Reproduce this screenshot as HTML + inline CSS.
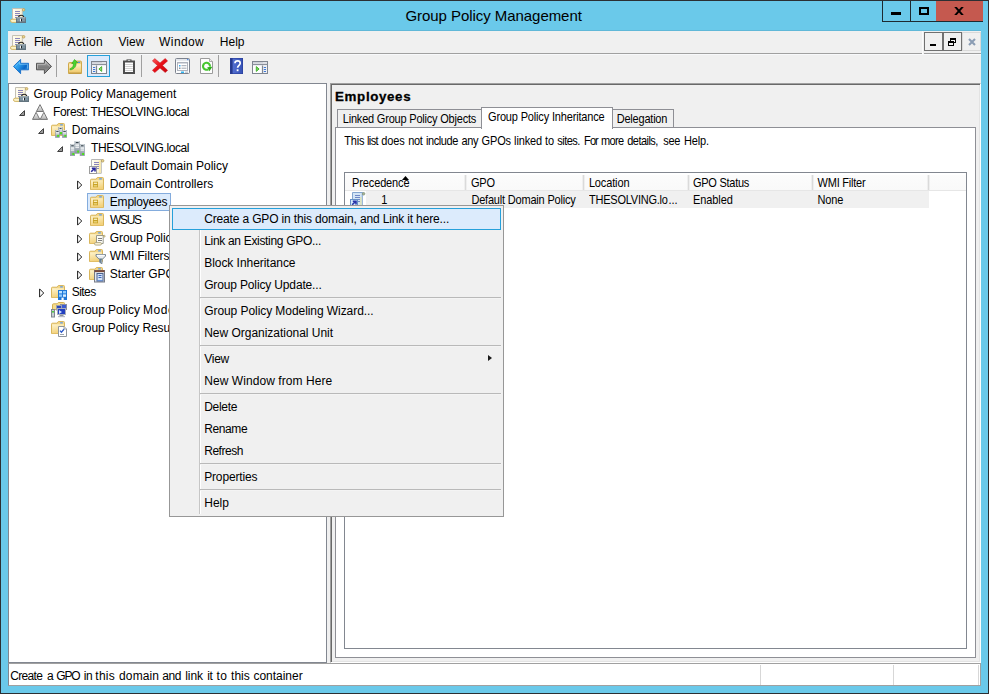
<!DOCTYPE html>
<html lang="en">
<head>
<meta charset="utf-8">
<title>Group Policy Management</title>
<style>
*{box-sizing:border-box;margin:0;padding:0}
html,body{width:989px;height:694px;overflow:hidden}
body{background:#6ac9ea;font-family:"Liberation Sans",sans-serif;font-size:12px;color:#000;position:relative}
.t{position:absolute;white-space:pre;color:#000}
.ic{position:absolute;line-height:0}
.ic svg{display:block}
#frame{position:absolute;left:0;top:0;width:989px;height:694px;border:1px solid #2b2f33;z-index:50;pointer-events:none}
#capbtns{position:absolute;left:882px;top:1px;width:101px;height:21px;background:#1d2a31}
.cb{position:absolute;top:0;height:20px}
.cb.min{left:1px;width:27px;background:#6ac9ea}
.cb.max{left:29px;width:25px;background:#6ac9ea}
.cb.cls{left:54px;width:47px;background:#c5594f}
.cb.min i{position:absolute;left:8px;top:11px;width:10px;height:3px;background:#000}
.cb.max i{position:absolute;left:8px;top:6px;width:10px;height:8px;border:2px solid #000;border-top-width:2px}
.cb.cls svg{position:absolute;left:18px;top:6px}
#tbline{position:absolute;left:8px;top:30px;width:973px;height:1px;background:#60b8d8}
#menubar{position:absolute;left:8px;top:31px;width:973px;height:23px;background:#f0f0f0;border-bottom:1px solid #a0a0a0}
#menubar .ic,#menubar .t{margin-left:-8px;margin-top:-31px}
#mdibtns{position:absolute;left:916px;top:1px;width:57px;height:19px}
#mdigap{position:absolute;left:914px;top:0;width:2px;height:23px;background:#f0f0f0;border-left:1px solid #fbfbfb}
.mb{position:absolute;top:0;width:19px;height:19px;border:1px solid #707070;background:#f0f0f0}
.mb:nth-child(1){left:0}.mb:nth-child(2){left:19px}.mb:nth-child(3){left:38px;border-color:#d9d9d9}
.mb .mmin{position:absolute;left:5px;top:11px;width:6px;height:2px;background:#000}
.mb svg{position:absolute;left:4px;top:5px}
.mb.dis svg{left:5px;top:5px}
#toolbar{position:absolute;left:8px;top:54px;width:973px;height:29px;background:#f0f0f0;border-top:1px solid #f8f9fb}
#toolbar .ic,#toolbar .tsep,#toolbar .tpress{margin-left:-8px;margin-top:-55px}
.tsep{position:absolute;top:55px;width:1px;height:22px;background:#a0a0a0}
.tpress{position:absolute;width:23px;height:22px;border:1px solid #26a0da;background:#dbe9fb}
#client{position:absolute;left:8px;top:83px;width:973px;height:581px;background:#f0f0f0}
#tree{position:absolute;left:0;top:0;width:319px;height:580px;background:#fff;border:1px solid #828790;overflow:hidden}
#tree .ic,#tree .t,#tree #sel{margin-left:-9px;margin-top:-84px}
#sel{position:absolute;left:87px;top:193px;width:84px;height:18px;border:1px solid #84acdd;background:#dcebfc}
#right{position:absolute;left:322px;top:0;width:651px;height:580px;background:#f0f0f0;border:1px solid;border-color:#a0a0a0 #fff #fff #a0a0a0;box-shadow:inset 1px 1px 0 #696969,inset -1px -1px 0 #e3e3e3}
#right>*,#rptext>*{margin-left:-331px;margin-top:-84px}
#right>#rptext{margin:0}
.tabb{position:absolute;top:109px;height:19px;border:1px solid #8e8f95;border-bottom:none;background:#f0f0f0}
#tab1{left:337px;width:145px}
#tab3{left:611px;width:63px}
#tab2{position:absolute;left:481px;top:107px;width:132px;height:22px;border:1px solid #8e8f95;border-bottom:none;background:#fff}
#tabpane{position:absolute;left:335px;top:127px;width:641px;height:531px;background:#fff;border:1px solid #8e8f95}
#list{position:absolute;left:344px;top:172px;width:623px;height:477px;background:#fff;border:1px solid #828790}
#lhead{position:absolute;left:0;top:0;width:621px;height:18px;background:linear-gradient(#fff 0,#fff 2px,#fcfcfc 2px,#f9f9f9 100%);border-bottom:1px solid #e6e6e6}
.cd{position:absolute;top:2px;width:3px;height:15px;background:#dadada;border-left:1px solid #efefef;border-right:1px solid #efefef;margin-left:-2px}
#lrow{position:absolute;left:21px;top:18px;width:563px;height:17px;background:#f0f0f0}
#status{position:absolute;left:8px;top:663px;width:973px;height:23px;background:#fff;border:1px solid #a0a0a0;border-left-color:#828790}
#status .t{margin-left:-9px;margin-top:-664px}
.sd{position:absolute;top:1px;margin-left:-1px;width:1px;height:20px;background:#d7d7d7}
#ctx{position:absolute;left:169px;top:205px;width:335px;height:312px;background:#f0f0f0;border:1px solid #979797;z-index:10}
#ctxg{position:absolute;left:29px;top:2px;width:2px;height:306px;border-left:1px solid #c6c6c6;border-right:1px solid #fff}
#ctxh{position:absolute;left:2px;top:2px;width:329px;height:22px;border:1px solid #26a0da;background:#dcebfc}
.cms{position:absolute;left:30px;width:301px;height:2px;border-top:1px solid #b9b9b9;border-bottom:1px solid #f4f4f4;margin-top:-206px}
#ctxa{position:absolute;left:318px;top:149px;width:0;height:0;border:3.500px solid transparent;border-left:4px solid #1a1a1a;border-right:none}
.hd{-webkit-text-stroke:.3px #000}
.tab,.rp,.lh,.lr{transform:scaleY(1.09);transform-origin:0 11.800px}

</style>
</head>
<body>
<div id="frame"></div>
<div id="titlebar"><div class="ic" style="left:10px;top:8px"><svg width="16" height="15" viewBox="0 0 16 15" >
<path d="M2.500 .5h10.300l-.5 1.500v9.500H2.500z" fill="#fdf6dc" stroke="#c4c0b4" stroke-width="1"/>
<path d="M3.200 1.200h2v9.800h-2z" fill="#fffdf2"/>
<circle cx="13.600" cy="1.800" r="1.300" fill="#e9d48f" stroke="#b7994d" stroke-width=".7"/>
<path d="M5 3.500h5M5 5.500h5M5 7.500h5M5 9.500h3" stroke="#8a86bc" stroke-width="1"/>
<rect x=".5" y="11.200" width="8" height="3.200" rx="1.600" fill="#fdf3c8" stroke="#d1b566" stroke-width="1"/>
<path d="M8.600 9.600c0-3.100 5-3.100 5.200 0" fill="#f7eecb" stroke="#2a2824" stroke-width="1.100"/>
<rect x="6.500" y="9.500" width="9" height="5" fill="#71848f" stroke="#62747f" stroke-width="1"/>
<rect x="6.500" y="9.100" width="9" height="1.400" fill="#a3b1ba"/>
<rect x="7.200" y="11.300" width="7.600" height="1.700" fill="#8ea5b3" opacity=".7"/>
<rect x="10" y="10.800" width="1" height="2.600" fill="#f4f6f7"/><rect x="11" y="10.800" width="1" height="2.400" fill="#1c2226"/>
</svg></div>
<div class="t title" style="left:405.50px;top:4.80px;font-size:15px;line-height:22px;letter-spacing:-0.056px">Group Policy Management</div>
<div id="capbtns"><div class="cb min"><i></i></div><div class="cb max"><i></i></div><div class="cb cls"><svg width="10" height="8" viewBox="0 0 10 8"><path d="M.2 0h2.600L5 2.600 7.200 0h2.600L6.300 4l3.500 4H7.200L5 5.400 2.800 8H.2L3.700 4z" fill="#000"/></svg></div></div>
</div>
<div id="tbline"></div>
<div id="menubar"><div class="ic" style="left:10px;top:35px"><svg width="16" height="15" viewBox="0 0 16 15" >
<path d="M2.500 .5h10.300l-.5 1.500v9.500H2.500z" fill="#fdf6dc" stroke="#c4c0b4" stroke-width="1"/>
<path d="M3.200 1.200h2v9.800h-2z" fill="#fffdf2"/>
<circle cx="13.600" cy="1.800" r="1.300" fill="#e9d48f" stroke="#b7994d" stroke-width=".7"/>
<path d="M5 3.500h5M5 5.500h5M5 7.500h5M5 9.500h3" stroke="#8a86bc" stroke-width="1"/>
<rect x=".5" y="11.200" width="8" height="3.200" rx="1.600" fill="#fdf3c8" stroke="#d1b566" stroke-width="1"/>
<path d="M8.600 9.600c0-3.100 5-3.100 5.200 0" fill="#f7eecb" stroke="#2a2824" stroke-width="1.100"/>
<rect x="6.500" y="9.500" width="9" height="5" fill="#71848f" stroke="#62747f" stroke-width="1"/>
<rect x="6.500" y="9.100" width="9" height="1.400" fill="#a3b1ba"/>
<rect x="7.200" y="11.300" width="7.600" height="1.700" fill="#8ea5b3" opacity=".7"/>
<rect x="10" y="10.800" width="1" height="2.600" fill="#f4f6f7"/><rect x="11" y="10.800" width="1" height="2.400" fill="#1c2226"/>
</svg></div>
<div class="t mi" style="left:33.90px;top:32.84px;font-size:12px;line-height:18px;letter-spacing:-0.236px">File</div>
<div class="t mi" style="left:67.60px;top:32.84px;font-size:12px;line-height:18px;letter-spacing:0.357px">Action</div>
<div class="t mi" style="left:118.60px;top:32.84px;font-size:12px;line-height:18px;letter-spacing:-0.024px">View</div>
<div class="t mi" style="left:159.10px;top:32.84px;font-size:12px;line-height:18px;letter-spacing:0.402px">Window</div>
<div class="t mi" style="left:219.70px;top:32.84px;font-size:12px;line-height:18px;letter-spacing:0.053px">Help</div>
<div id="mdigap"></div><div id="mdibtns"><div class="mb"><i class="mmin"></i></div><div class="mb"><svg width="8" height="8" viewBox="0 0 8 8" shape-rendering="crispEdges"><rect x="2" y="0" width="6" height="2" fill="#000"/><rect x="7" y="2" width="1" height="3" fill="#000"/><rect x="6" y="4" width="1" height="1" fill="#000"/><rect x="2" y="2" width="1" height="1" fill="#000"/><rect x="0" y="3" width="6" height="2" fill="#000"/><rect x="0" y="5" width="1" height="3" fill="#000"/><rect x="5" y="5" width="1" height="3" fill="#000"/><rect x="0" y="7" width="6" height="1" fill="#000"/></svg></div><div class="mb dis"><svg width="8" height="8" viewBox="0 0 8 8"><path d="M1 1L7 7M7 1L1 7" stroke="#8b9db4" stroke-width="2.100"/></svg></div></div>
</div>
<div id="toolbar"><div class="ic" style="left:13px;top:59px"><svg width="16" height="15" viewBox="0 0 16 15" ><defs><linearGradient id="bk" x1="0" y1="0" x2="1" y2=".6"><stop offset="0" stop-color="#3db0f5"/><stop offset=".45" stop-color="#2a9cec"/><stop offset=".8" stop-color="#0a66c6"/><stop offset="1" stop-color="#2c8de0"/></linearGradient></defs>
<path d="M.5 7.400L7.600 .4v3.900h8v6.500h-8v3.900z" fill="url(#bk)" stroke="#1f74cc" stroke-width="1" stroke-linejoin="round"/>
<path d="M2.200 7.400L6.600 3v2.300h8v4.300" fill="none" stroke="#8fd3fb" stroke-width=".8" opacity=".75"/></svg></div><div class="ic" style="left:36px;top:59px"><svg width="16" height="15" viewBox="0 0 16 15" ><defs><linearGradient id="fw" x1="0" y1="0" x2="0" y2="1"><stop offset="0" stop-color="#b4b4b4"/><stop offset=".55" stop-color="#7c7c7c"/><stop offset="1" stop-color="#9c9c9c"/></linearGradient></defs>
<path d="M15.500 7.400L8.400 .4v3.900H.5v6.500h7.900v3.900z" fill="url(#fw)" stroke="#545454" stroke-width="1" stroke-linejoin="round"/>
<path d="M1.500 9.600V5.300h7.900V3l4.400 4.400" fill="none" stroke="#d2d2d2" stroke-width=".8" opacity=".7"/></svg></div><div class="tsep" style="left:56px"></div><div class="ic" style="left:68px;top:59px"><svg width="14" height="15" viewBox="0 0 14 15" >
<defs><linearGradient id="upg" x1="0" y1="0" x2="0" y2="1"><stop offset="0" stop-color="#fdf1c6"/><stop offset="1" stop-color="#efc868"/></linearGradient></defs>
<path d="M.5 4.500q0-1 1-1h4.500l1.200-1.400h5.300q1 0 1 1v11.400H.5z" fill="#f1d27a" stroke="#cfa94c" stroke-width="1"/>
<path d="M1.100 5.200h11.800v8.600H1.100z" fill="url(#upg)"/>
<path d="M1 14h12" stroke="#b48a3a" stroke-width=".8"/>
<rect x="9.600" y="2.800" width="2.600" height="1.100" rx=".5" fill="#4f8fe6"/>
<path d="M1.800 9.900c2.800-1 3.900-3 3.600-5.600l-1.700.4 2.800-4.200 3.300 3.200-1.900.1c.8 3.500-1.800 6.400-5.400 7.100z" fill="#49d42f" stroke="#27a318" stroke-width=".6" stroke-linejoin="round"/>
</svg></div><div class="tpress" style="left:87px;top:55px"></div><div class="ic" style="left:91px;top:61px"><svg width="16" height="13" viewBox="0 0 16 13" >
<rect x=".5" y=".5" width="15" height="12" fill="#fdfdfd" stroke="#7f8590" stroke-width="1"/>
<rect x="1" y="1" width="14" height="1.800" fill="#cfd2d9"/>
<rect x="11.500" y="1.200" width="1" height="1" fill="#fff"/><rect x="13.500" y="1.200" width="1" height="1" fill="#fff"/>
<path d="M.5 3.500h15" stroke="#8a909b" stroke-width="1"/>
<path d="M1 4.500h14" stroke="#eceef2" stroke-width="1"/>
<rect x="1" y="5" width="4" height="7" fill="#eef0f4"/>
<path d="M5.500 4.500v8" stroke="#7f8590" stroke-width="1.200"/>
<path d="M2 6.500h2.200M2 8.500h2.200M2 10.500h2.200" stroke="#3f79d8" stroke-width="1.100"/>
<path d="M10.700 5.600v4.800L7.900 8z" fill="#8fe07c" stroke="#3fae28" stroke-width=".9" stroke-linejoin="round"/>
</svg></div><div class="ic" style="left:123px;top:59px"><svg width="12" height="15" viewBox="0 0 12 15" >
<rect x="1" y="2.500" width="10" height="11.500" fill="#fefefe" stroke="#4e4e4e" stroke-width="2"/>
<rect x="3.500" y=".4" width="5" height="2.200" fill="#4e4e4e"/>
<rect x="4.700" y="1" width="2.600" height="1" fill="#bdbdbd"/>
<path d="M2.200 5.500h7.600M2.200 7.500h7.600M2.200 9.500h7.600M2.200 11.500h7.600" stroke="#cfcfcf" stroke-width="1"/>
</svg></div><div class="tsep" style="left:141px"></div><div class="ic" style="left:152px;top:58px"><svg width="16" height="15" viewBox="0 0 16 15" >
<defs><linearGradient id="dl" x1="0" y1="0" x2="1" y2="1"><stop offset="0" stop-color="#ff5a5a"/><stop offset=".5" stop-color="#e60f17"/><stop offset="1" stop-color="#c4060e"/></linearGradient></defs>
<path d="M2.700 .6L8 5 13.200 .5 15.600 2.900 10.500 7.500 15.600 12.300 13.300 14.600 8 10 2.800 14.600 .4 12.300 5.500 7.500 .4 3z" fill="url(#dl)" stroke="#c8141c" stroke-width=".5" stroke-linejoin="round"/>
</svg></div><div class="ic" style="left:175px;top:58px"><svg width="15" height="16" viewBox="0 0 15 16" >
<rect x=".5" y=".5" width="14" height="15" rx="1" fill="#fbfcfd" stroke="#7c828e" stroke-width="1"/>
<rect x="1" y="1" width="13" height="1.800" fill="#e3e6eb"/>
<rect x="12" y="1" width="1.500" height="1.200" fill="#5b8fe0"/>
<rect x="2.500" y="4.500" width="10" height="8" fill="#fff" stroke="#aeb3bd" stroke-width="1"/>
<path d="M3 5.500h9" stroke="#d8dbe1" stroke-width="1"/>
<rect x="4" y="7" width="1.500" height="1.500" fill="#35a7f0"/><path d="M6.500 7.700h5" stroke="#9fa5b0" stroke-width="1"/>
<rect x="4" y="9.500" width="1.500" height="1.500" fill="#8a919c"/><path d="M6.500 10.200h5" stroke="#9fa5b0" stroke-width="1"/>
<rect x="6" y="13.500" width="3" height="1.500" fill="#2fb5f2"/><rect x="10" y="13.500" width="3" height="1.500" fill="#c9cdd4"/>
</svg></div><div class="ic" style="left:200px;top:58px"><svg width="13" height="16" viewBox="0 0 13 16" >
<path d="M.5 .5h9l3 3v12H.5z" fill="#fdfdfd" stroke="#9b9b9b" stroke-width="1"/>
<path d="M9.500 .5v3h3" fill="#ececec" stroke="#9b9b9b" stroke-width=".8"/>
<path d="M8.300 11.300A3.500 3.500 0 1 1 10 8.600" fill="none" stroke="#46c62f" stroke-width="2.100"/>
<path d="M7.200 9.200l5.200-.4-3 4.400z" fill="#2fae1c"/>
</svg></div><div class="tsep" style="left:218px"></div><div class="ic" style="left:230px;top:58px"><svg width="13" height="16" viewBox="0 0 13 16" >
<defs><linearGradient id="hp" x1="0" y1="0" x2="1" y2="0"><stop offset="0" stop-color="#5b77d8"/><stop offset="1" stop-color="#3450b4"/></linearGradient></defs>
<rect x="0" y="0" width="13" height="16" fill="url(#hp)"/>
<rect x="0" y="0" width="2.600" height="16" fill="#26398c"/>
<rect x=".3" y=".3" width="12.400" height="15.400" fill="none" stroke="#2b3f99" stroke-width=".6"/>
<path d="M5 5.200c0-3 5.200-3 5.200 0 0 2-2.600 2.200-2.600 4.600" fill="none" stroke="#fff" stroke-width="1.700"/>
<rect x="6.700" y="11.300" width="1.800" height="1.900" fill="#fff"/>
</svg></div><div class="ic" style="left:252px;top:61px"><svg width="16" height="13" viewBox="0 0 16 13" >
<rect x=".5" y=".5" width="15" height="12" fill="#fdfdfd" stroke="#7f8590" stroke-width="1"/>
<rect x="1" y="1" width="14" height="1.800" fill="#cfd2d9"/>
<rect x="11.500" y="1.200" width="1" height="1" fill="#fff"/><rect x="13.500" y="1.200" width="1" height="1" fill="#fff"/>
<path d="M.5 3.500h15" stroke="#8a909b" stroke-width="1"/>
<path d="M1 4.500h14" stroke="#eceef2" stroke-width="1"/>
<rect x="11" y="5" width="4" height="7" fill="#eef0f4"/>
<path d="M10.500 4.500v8" stroke="#7f8590" stroke-width="1.200"/>
<path d="M11.800 6.500h2.200M11.800 8.500h2.200M11.800 10.500h2.200" stroke="#3f79d8" stroke-width="1.100"/>
<path d="M4.300 5.600v4.800L7.100 8z" fill="#6fd558" stroke="#3fae28" stroke-width=".9" stroke-linejoin="round"/>
</svg></div></div>
<div id="client">
<div id="tree">
<div id="sel"></div>
<div class="ic" style="left:13px;top:87px"><svg width="16" height="15" viewBox="0 0 16 15" >
<path d="M2.500 .5h10.300l-.5 1.500v9.500H2.500z" fill="#fdf6dc" stroke="#c4c0b4" stroke-width="1"/>
<path d="M3.200 1.200h2v9.800h-2z" fill="#fffdf2"/>
<circle cx="13.600" cy="1.800" r="1.300" fill="#e9d48f" stroke="#b7994d" stroke-width=".7"/>
<path d="M5 3.500h5M5 5.500h5M5 7.500h5M5 9.500h3" stroke="#8a86bc" stroke-width="1"/>
<rect x=".5" y="11.200" width="8" height="3.200" rx="1.600" fill="#fdf3c8" stroke="#d1b566" stroke-width="1"/>
<path d="M8.600 9.600c0-3.100 5-3.100 5.200 0" fill="#f7eecb" stroke="#2a2824" stroke-width="1.100"/>
<rect x="6.500" y="9.500" width="9" height="5" fill="#71848f" stroke="#62747f" stroke-width="1"/>
<rect x="6.500" y="9.100" width="9" height="1.400" fill="#a3b1ba"/>
<rect x="7.200" y="11.300" width="7.600" height="1.700" fill="#8ea5b3" opacity=".7"/>
<rect x="10" y="10.800" width="1" height="2.600" fill="#f4f6f7"/><rect x="11" y="10.800" width="1" height="2.400" fill="#1c2226"/>
</svg></div><div class="ic" style="left:19px;top:110px"><svg width="6" height="6" viewBox="0 0 6 6"><path d="M5.500 .6v4.900H.6z" fill="#9c9c9c" stroke="#3e3e3e" stroke-width="1" stroke-linejoin="miter"/></svg></div><div class="ic" style="left:32px;top:104px"><svg width="16" height="16" viewBox="0 0 16 16" >
<defs><linearGradient id="fg" x1="0" y1="0" x2="0" y2="1"><stop offset="0" stop-color="#f8f8f8"/><stop offset="1" stop-color="#b4b4b4"/></linearGradient></defs>
<path d="M8 .6L11.6 7.5H4.4z" fill="url(#fg)" stroke="#5c5c5c" stroke-width=".8" stroke-linejoin="round"/>
<path d="M4.1 8.3L7.8 15.4H.5z" fill="url(#fg)" stroke="#5c5c5c" stroke-width=".8" stroke-linejoin="round"/>
<path d="M11.9 8.3L15.5 15.4H8.2z" fill="url(#fg)" stroke="#5c5c5c" stroke-width=".8" stroke-linejoin="round"/>
</svg></div><div class="ic" style="left:38px;top:128px"><svg width="6" height="6" viewBox="0 0 6 6"><path d="M5.500 .6v4.900H.6z" fill="#9c9c9c" stroke="#3e3e3e" stroke-width="1" stroke-linejoin="miter"/></svg></div><div class="ic" style="left:51px;top:123px"><svg width="17" height="16" viewBox="0 0 17 16" ><defs><linearGradient id="fo" x1="0" y1="0" x2=".3" y2="1"><stop offset="0" stop-color="#fef4cf"/><stop offset="1" stop-color="#f3d27c"/></linearGradient></defs>
<path d="M.5 3.200q0-1 1-1h4.600l1.200-1.700h5.200q1 0 1 1v11.0H.5z" fill="#f3d687" stroke="#d9b65c" stroke-width="1"/>
<path d="M1.100 3.300h11.8v9.0H1.100z" fill="url(#fo)"/>
<rect x="9" y="1.200" width="3" height="1.200" rx=".6" fill="#5b9bf0"/><defs><linearGradient id="sv" x1="0" y1="0" x2="0" y2="1"><stop offset="0" stop-color="#d6dce1"/><stop offset="1" stop-color="#8894a0"/></linearGradient></defs><rect x="7.70" y="4.40" width="3.70" height="7.40" fill="url(#sv)" stroke="#8e9aa4" stroke-width=".6"/>
<rect x="8.00" y="4.50" width="3.10" height=".8" fill="#f1f4f6"/>
<rect x="8.60" y="5.20" width="1.90" height="1" fill="#26343d"/>
<rect x="8.20" y="6.34" width="2.70" height="0.80" fill="#f6f8f9"/>
<rect x="8.20" y="7.70" width="2.70" height="0.80" fill="#eff2f4"/>
<rect x="9.00" y="9.10" width="2" height="2" fill="#4be01a"/><rect x="4.40" y="7.40" width="4.10" height="7.10" fill="url(#sv)" stroke="#8e9aa4" stroke-width=".6"/>
<rect x="4.70" y="7.50" width="3.50" height=".8" fill="#f1f4f6"/>
<rect x="5.30" y="8.20" width="2.30" height="1" fill="#26343d"/>
<rect x="4.90" y="9.26" width="3.10" height="0.77" fill="#f6f8f9"/>
<rect x="4.90" y="10.56" width="3.10" height="0.77" fill="#eff2f4"/>
<rect x="6.10" y="11.80" width="2" height="2" fill="#4be01a"/><rect x="11.40" y="7.40" width="4.30" height="7.10" fill="url(#sv)" stroke="#8e9aa4" stroke-width=".6"/>
<rect x="11.70" y="7.50" width="3.70" height=".8" fill="#f1f4f6"/>
<rect x="12.30" y="8.20" width="2.50" height="1" fill="#26343d"/>
<rect x="11.90" y="9.26" width="3.30" height="0.77" fill="#f6f8f9"/>
<rect x="11.90" y="10.56" width="3.30" height="0.77" fill="#eff2f4"/>
<rect x="13.30" y="11.80" width="2" height="2" fill="#4be01a"/></svg></div><div class="ic" style="left:57px;top:146px"><svg width="6" height="6" viewBox="0 0 6 6"><path d="M5.500 .6v4.900H.6z" fill="#9c9c9c" stroke="#3e3e3e" stroke-width="1" stroke-linejoin="miter"/></svg></div><div class="ic" style="left:70px;top:141px"><svg width="15" height="15" viewBox="0 0 15 15" ><defs><linearGradient id="sv" x1="0" y1="0" x2="0" y2="1"><stop offset="0" stop-color="#d6dce1"/><stop offset="1" stop-color="#8894a0"/></linearGradient></defs><rect x="4.90" y="0.30" width="4.60" height="12.00" fill="url(#sv)" stroke="#8e9aa4" stroke-width=".6"/>
<rect x="5.20" y="0.40" width="4.00" height=".8" fill="#f1f4f6"/>
<rect x="5.80" y="1.10" width="2.80" height="1" fill="#26343d"/>
<rect x="5.40" y="3.53" width="3.60" height="1.26" fill="#f6f8f9"/>
<rect x="5.40" y="5.67" width="3.60" height="1.26" fill="#eff2f4"/>
<rect x="7.10" y="9.60" width="2" height="2" fill="#4be01a"/><rect x="0.30" y="3.50" width="4.40" height="11.20" fill="url(#sv)" stroke="#8e9aa4" stroke-width=".6"/>
<rect x="0.60" y="3.60" width="3.80" height=".8" fill="#f1f4f6"/>
<rect x="1.20" y="4.30" width="2.60" height="1" fill="#26343d"/>
<rect x="0.80" y="6.50" width="3.40" height="1.18" fill="#f6f8f9"/>
<rect x="0.80" y="8.51" width="3.40" height="1.18" fill="#eff2f4"/>
<rect x="2.30" y="12.00" width="2" height="2" fill="#4be01a"/><rect x="10.10" y="3.50" width="4.40" height="11.20" fill="url(#sv)" stroke="#8e9aa4" stroke-width=".6"/>
<rect x="10.40" y="3.60" width="3.80" height=".8" fill="#f1f4f6"/>
<rect x="11.00" y="4.30" width="2.60" height="1" fill="#26343d"/>
<rect x="10.60" y="6.50" width="3.40" height="1.18" fill="#f6f8f9"/>
<rect x="10.60" y="8.51" width="3.40" height="1.18" fill="#eff2f4"/>
<rect x="12.10" y="12.00" width="2" height="2" fill="#4be01a"/></svg></div><div class="ic" style="left:89px;top:159px"><svg width="16" height="15" viewBox="0 0 16 15" >
<path d="M2.500 .5h10.300l-.5 1.500v12.300H2.500z" fill="#fdf7e0" stroke="#b8b8b8" stroke-width="1"/>
<rect x="9.800" y="1.500" width="2" height="12.500" fill="#fae79a" opacity=".75"/>
<rect x="3.100" y="1.100" width="1.800" height="13" fill="#fffef6"/>
<circle cx="13.600" cy="1.800" r="1.300" fill="#e9d48f" stroke="#a8904d" stroke-width=".7"/>
<path d="M5 3.500h5M5 5.500h5M5 7.500h5M5 9.500h5" stroke="#8a86bc" stroke-width="1"/>
<rect x=".5" y="7.500" width="7" height="7" fill="#fff" stroke="#9c9c9c" stroke-width="1"/>
<path d="M2.200 12.800l3-3M2.800 9.300h3.200v3.200" fill="none" stroke="#2a2a9c" stroke-width="1.600"/>
</svg></div><div class="ic" style="left:77px;top:180px"><svg width="6" height="10" viewBox="0 0 6 10"><path d="M.6 .9v8.200L4.700 5z" fill="#fff" stroke="#1e1e1e" stroke-width="1"/></svg></div><div class="ic" style="left:90px;top:177px"><svg width="14" height="13" viewBox="0 0 14 13" ><defs><linearGradient id="fo" x1="0" y1="0" x2=".3" y2="1"><stop offset="0" stop-color="#fef4cf"/><stop offset="1" stop-color="#f3d27c"/></linearGradient></defs>
<path d="M.5 3.200q0-1 1-1h4.600l1.200-1.700h5.200q1 0 1 1v11.0H.5z" fill="#f3d687" stroke="#d9b65c" stroke-width="1"/>
<path d="M1.100 3.300h11.8v9.0H1.100z" fill="url(#fo)"/>
<rect x="9" y="1.200" width="3" height="1.200" rx=".6" fill="#5b9bf0"/>
<rect x="3" y="4.7" width="5" height="5.6" fill="#c9a227"/>
<rect x="3.8" y="5.6" width="3.4" height="1.4" fill="#f8ecb8"/>
<rect x="3.8" y="8" width="3.4" height="1.6" fill="#e7cf73"/></svg></div><div class="ic" style="left:90px;top:195px"><svg width="14" height="13" viewBox="0 0 14 13" ><defs><linearGradient id="fo" x1="0" y1="0" x2=".3" y2="1"><stop offset="0" stop-color="#fef4cf"/><stop offset="1" stop-color="#f3d27c"/></linearGradient></defs>
<path d="M.5 3.200q0-1 1-1h4.600l1.200-1.700h5.200q1 0 1 1v11.0H.5z" fill="#f3d687" stroke="#d9b65c" stroke-width="1"/>
<path d="M1.100 3.300h11.8v9.0H1.100z" fill="url(#fo)"/>
<rect x="9" y="1.200" width="3" height="1.200" rx=".6" fill="#5b9bf0"/>
<rect x="3" y="4.7" width="5" height="5.6" fill="#c9a227"/>
<rect x="3.8" y="5.6" width="3.4" height="1.4" fill="#f8ecb8"/>
<rect x="3.8" y="8" width="3.4" height="1.6" fill="#e7cf73"/></svg></div><div class="ic" style="left:77px;top:216px"><svg width="6" height="10" viewBox="0 0 6 10"><path d="M.6 .9v8.200L4.700 5z" fill="#fff" stroke="#1e1e1e" stroke-width="1"/></svg></div><div class="ic" style="left:90px;top:213px"><svg width="14" height="13" viewBox="0 0 14 13" ><defs><linearGradient id="fo" x1="0" y1="0" x2=".3" y2="1"><stop offset="0" stop-color="#fef4cf"/><stop offset="1" stop-color="#f3d27c"/></linearGradient></defs>
<path d="M.5 3.200q0-1 1-1h4.600l1.200-1.700h5.200q1 0 1 1v11.0H.5z" fill="#f3d687" stroke="#d9b65c" stroke-width="1"/>
<path d="M1.100 3.300h11.8v9.0H1.100z" fill="url(#fo)"/>
<rect x="9" y="1.200" width="3" height="1.200" rx=".6" fill="#5b9bf0"/>
<rect x="3" y="4.7" width="5" height="5.6" fill="#c9a227"/>
<rect x="3.8" y="5.6" width="3.4" height="1.4" fill="#f8ecb8"/>
<rect x="3.8" y="8" width="3.4" height="1.6" fill="#e7cf73"/></svg></div><div class="ic" style="left:77px;top:234px"><svg width="6" height="10" viewBox="0 0 6 10"><path d="M.6 .9v8.200L4.700 5z" fill="#fff" stroke="#1e1e1e" stroke-width="1"/></svg></div><div class="ic" style="left:89px;top:231px"><svg width="17" height="15" viewBox="0 0 17 15" ><defs><linearGradient id="fo" x1="0" y1="0" x2=".3" y2="1"><stop offset="0" stop-color="#fef4cf"/><stop offset="1" stop-color="#f3d27c"/></linearGradient></defs>
<path d="M.5 3.200q0-1 1-1h4.600l1.200-1.700h5.200q1 0 1 1v11.0H.5z" fill="#f3d687" stroke="#d9b65c" stroke-width="1"/>
<path d="M1.100 3.300h11.8v9.0H1.100z" fill="url(#fo)"/>
<rect x="9" y="1.200" width="3" height="1.200" rx=".6" fill="#5b9bf0"/>
<path d="M7.5 4.5h7.5l-.8 1.3v6.7H7.5z" fill="#fbfbf6" stroke="#9a9a8c" stroke-width="1"/>
<circle cx="15.2" cy="5.2" r="1" fill="#e6d9a6" stroke="#9a8f62" stroke-width=".5"/>
<path d="M9 7.5h4M9 9.5h4" stroke="#7e7e7e" stroke-width="1"/>
<rect x="5.5" y="11.5" width="7" height="2.6" rx="1.3" fill="#f3ecd0" stroke="#a79d79" stroke-width=".8"/>
</svg></div><div class="ic" style="left:77px;top:252px"><svg width="6" height="10" viewBox="0 0 6 10"><path d="M.6 .9v8.200L4.700 5z" fill="#fff" stroke="#1e1e1e" stroke-width="1"/></svg></div><div class="ic" style="left:89px;top:249px"><svg width="17" height="16" viewBox="0 0 17 16" ><defs><linearGradient id="fo" x1="0" y1="0" x2=".3" y2="1"><stop offset="0" stop-color="#fef4cf"/><stop offset="1" stop-color="#f3d27c"/></linearGradient></defs>
<path d="M.5 3.200q0-1 1-1h4.600l1.200-1.700h5.200q1 0 1 1v11.0H.5z" fill="#f3d687" stroke="#d9b65c" stroke-width="1"/>
<path d="M1.100 3.300h11.8v9.0H1.100z" fill="url(#fo)"/>
<rect x="9" y="1.200" width="3" height="1.200" rx=".6" fill="#5b9bf0"/>
<path d="M7 5.5h9.5v1.6l-3.5 3.6v4l-2.4-1.4v-2.6L7 7.1z" fill="#e9edf0" stroke="#7a8791" stroke-width="1" stroke-linejoin="round"/>
<path d="M8 6.3h7.5" stroke="#fff" stroke-width="1"/>
<path d="M9.8 9.6l3.8 0-1.3 1.7v3l-1.2-.7v-2.3z" fill="#5f7b8e"/>
</svg></div><div class="ic" style="left:77px;top:270px"><svg width="6" height="10" viewBox="0 0 6 10"><path d="M.6 .9v8.200L4.700 5z" fill="#fff" stroke="#1e1e1e" stroke-width="1"/></svg></div><div class="ic" style="left:89px;top:267px"><svg width="17" height="16" viewBox="0 0 17 16" ><defs><linearGradient id="fo" x1="0" y1="0" x2=".3" y2="1"><stop offset="0" stop-color="#fef4cf"/><stop offset="1" stop-color="#f3d27c"/></linearGradient></defs>
<path d="M.5 3.200q0-1 1-1h4.600l1.200-1.700h5.200q1 0 1 1v11.0H.5z" fill="#f3d687" stroke="#d9b65c" stroke-width="1"/>
<path d="M1.100 3.300h11.8v9.0H1.100z" fill="url(#fo)"/>
<rect x="9" y="1.200" width="3" height="1.200" rx=".6" fill="#5b9bf0"/>
<rect x="5.500" y="3.500" width="10" height="11.500" fill="#e4e9f0" stroke="#777b86" stroke-width="1"/>
<rect x="5.500" y="3.200" width="10" height="1.900" fill="#7b4a3a"/>
<rect x="8" y="6.500" width="6" height="7.500" fill="#d4e3f8" stroke="#4a5f8c" stroke-width="1"/>
<path d="M9.500 8.500h3M9.500 10.500h3" stroke="#3f66b8" stroke-width="1.200"/>
<rect x="8.500" y="13" width="5" height="1" fill="#6a92d4"/>
</svg></div><div class="ic" style="left:39px;top:288px"><svg width="6" height="10" viewBox="0 0 6 10"><path d="M.6 .9v8.200L4.700 5z" fill="#fff" stroke="#1e1e1e" stroke-width="1"/></svg></div><div class="ic" style="left:51px;top:285px"><svg width="17" height="15" viewBox="0 0 17 15" ><defs><linearGradient id="fo" x1="0" y1="0" x2=".3" y2="1"><stop offset="0" stop-color="#fef4cf"/><stop offset="1" stop-color="#f3d27c"/></linearGradient></defs>
<path d="M.5 3.200q0-1 1-1h4.600l1.200-1.700h5.200q1 0 1 1v11.0H.5z" fill="#f3d687" stroke="#d9b65c" stroke-width="1"/>
<path d="M1.100 3.300h11.8v9.0H1.100z" fill="url(#fo)"/>
<rect x="9" y="1.200" width="3" height="1.200" rx=".6" fill="#5b9bf0"/>
<rect x="7" y="5" width="9" height="10" fill="#1f77d6"/>
<rect x="8" y="6" width="3" height="2.4" fill="#bfe2ff"/><rect x="12" y="6" width="3" height="2.4" fill="#8ecbff"/>
<rect x="8" y="9.4" width="3" height="2.4" fill="#8ecbff"/><rect x="12" y="9.4" width="3" height="2.4" fill="#d8eeff"/>
<rect x="10.5" y="12.6" width="2.2" height="2.4" fill="#fff"/>
</svg></div><div class="ic" style="left:51px;top:302px"><svg width="17" height="16" viewBox="0 0 17 16" >
<path d="M1.5 2.8q0-1 1-1h3.6l1.2-1.3h5.2q1 0 1 1v6H1.5z" fill="#f6dc8c" stroke="#d2b054" stroke-width="1"/>
<rect x="9.5" y="2.5" width="6" height="5" fill="#3c5bd0" stroke="#8a8fa0" stroke-width="1"/>
<rect x="5.5" y="3.5" width="5" height="4.5" fill="#2c47b8" stroke="#9a9fb0" stroke-width="1"/>
<rect x="6.5" y="6.5" width="8" height="6" fill="#2340c0" stroke="#a8adbb" stroke-width="1"/>
<path d="M8 8l3 2-3 2z" fill="#cfe0ff"/>
<rect x="8.5" y="13" width="4" height="1" fill="#8d929e"/><rect x="7" y="14" width="7" height="1.2" fill="#b7bbc5"/>
<rect x=".5" y="7.5" width="3" height="7.5" fill="#c9ced4" stroke="#7f8790" stroke-width="1"/>
<rect x="1.2" y="9" width="1.6" height="1.6" fill="#35c91f"/>
</svg></div><div class="ic" style="left:51px;top:321px"><svg width="17" height="16" viewBox="0 0 17 16" ><defs><linearGradient id="fo" x1="0" y1="0" x2=".3" y2="1"><stop offset="0" stop-color="#fef4cf"/><stop offset="1" stop-color="#f3d27c"/></linearGradient></defs>
<path d="M.5 3.200q0-1 1-1h4.600l1.200-1.700h5.200q1 0 1 1v11.0H.5z" fill="#f3d687" stroke="#d9b65c" stroke-width="1"/>
<path d="M1.100 3.300h11.8v9.0H1.100z" fill="url(#fo)"/>
<rect x="9" y="1.200" width="3" height="1.200" rx=".6" fill="#5b9bf0"/>
<path d="M7.5 5.5h5.5l2.5 2.5v7.5h-8z" fill="#fff" stroke="#8f959c" stroke-width="1"/>
<path d="M13 5.5v2.5h2.5" fill="#e4e7ea" stroke="#8f959c" stroke-width=".8"/>
<path d="M9 9.6l1.4 1.6 2.6-3" fill="none" stroke="#2a58c8" stroke-width="1.3"/>
<path d="M9 13.5h4" stroke="#9aa3ad" stroke-width="1"/>
</svg></div>
<div class="t tn" style="left:33.60px;top:84.84px;font-size:12px;line-height:18px;letter-spacing:0.027px">Group Policy Management</div>
<div class="t tn" style="left:53.00px;top:102.84px;font-size:12px;line-height:18px;letter-spacing:-0.368px">Forest: THESOLVING.local</div>
<div class="t tn" style="left:71.70px;top:120.84px;font-size:12px;line-height:18px;letter-spacing:0.063px">Domains</div>
<div class="t tn" style="left:91.10px;top:138.84px;font-size:12px;line-height:18px;letter-spacing:-0.405px">THESOLVING.local</div>
<div class="t tn" style="left:109.80px;top:156.84px;font-size:12px;line-height:18px;letter-spacing:0.007px">Default Domain Policy</div>
<div class="t tn" style="left:109.80px;top:174.84px;font-size:12px;line-height:18px;letter-spacing:0.050px">Domain Controllers</div>
<div class="t tn" style="left:109.80px;top:192.84px;font-size:12px;line-height:18px;letter-spacing:-0.208px">Employees</div>
<div class="t tn" style="left:110.00px;top:210.84px;font-size:12px;line-height:18px;letter-spacing:-1.325px">WSUS</div>
<div class="t tn" style="left:109.80px;top:228.84px;font-size:12px;line-height:18px;letter-spacing:-0.100px">Group Policy Objects</div>
<div class="t tn" style="left:109.80px;top:246.84px;font-size:12px;line-height:18px;letter-spacing:-0.100px">WMI Filters</div>
<div class="t tn" style="left:109.80px;top:264.84px;font-size:12px;line-height:18px;letter-spacing:-0.100px">Starter GPOs</div>
<div class="t tn" style="left:71.70px;top:282.84px;font-size:12px;line-height:18px;letter-spacing:-0.537px">Sites</div>
<div class="t tn" style="left:71.70px;top:300.84px;font-size:12px;line-height:18px;letter-spacing:-0.042px">Group Policy</div>
<div class="t tn" style="left:143.10px;top:300.84px;font-size:12px;line-height:18px;letter-spacing:0.500px">Modeling</div>
<div class="t tn" style="left:71.70px;top:318.84px;font-size:12px;line-height:18px;letter-spacing:-0.100px">Group Policy Results</div>
</div>
<div id="right">
<div class="t hd" style="left:335.10px;top:86.58px;font-size:13.33px;line-height:20px;letter-spacing:0.634px;font-weight:700">Employees</div>
<div id="tab1" class="tabb"></div><div id="tab3" class="tabb"></div>
<div id="tabpane"></div>
<div id="tab2"></div>
<div class="t tab" style="left:342.80px;top:111.19px;font-size:11px;line-height:16px;letter-spacing:-0.204px">Linked Group Policy Objects</div>
<div class="t tab" style="left:488.00px;top:109.19px;font-size:11px;line-height:16px;letter-spacing:-0.165px">Group Policy Inheritance</div>
<div class="t tab" style="left:616.70px;top:111.19px;font-size:11px;line-height:16px;letter-spacing:-0.209px">Delegation</div>
<div id="rptext"><span class="t rp" style="left:344.20px;top:133.19px;font-size:11px;line-height:16px;letter-spacing:-0.170px">This</span> <span class="t rp" style="left:366.90px;top:133.19px;font-size:11px;line-height:16px;letter-spacing:-0.563px">list</span> <span class="t rp" style="left:381.30px;top:133.19px;font-size:11px;line-height:16px;letter-spacing:-0.115px">does</span> <span class="t rp" style="left:408.20px;top:133.19px;font-size:11px;line-height:16px;letter-spacing:-0.332px">not</span> <span class="t rp" style="left:425.90px;top:133.19px;font-size:11px;line-height:16px;letter-spacing:-0.408px">include</span> <span class="t rp" style="left:461.40px;top:133.19px;font-size:11px;line-height:16px;letter-spacing:-0.283px">any</span> <span class="t rp" style="left:481.60px;top:133.19px;font-size:11px;line-height:16px;letter-spacing:-0.163px">GPOs</span> <span class="t rp" style="left:514.10px;top:133.19px;font-size:11px;line-height:16px;letter-spacing:-0.125px">linked</span> <span class="t rp" style="left:545.10px;top:133.19px;font-size:11px;line-height:16px;letter-spacing:-0.244px">to</span> <span class="t rp" style="left:557.20px;top:133.19px;font-size:11px;line-height:16px;letter-spacing:-0.498px">sites.</span> <span class="t rp" style="left:584.10px;top:133.19px;font-size:11px;line-height:16px;letter-spacing:-0.933px">For</span> <span class="t rp" style="left:601.10px;top:133.19px;font-size:11px;line-height:16px;letter-spacing:-0.716px">more</span> <span class="t rp" style="left:627.20px;top:133.19px;font-size:11px;line-height:16px;letter-spacing:-0.520px">details,</span> <span class="t rp" style="left:663.30px;top:133.19px;font-size:11px;line-height:16px;letter-spacing:-0.283px">see</span> <span class="t rp" style="left:683.90px;top:133.19px;font-size:11px;line-height:16px;letter-spacing:-0.158px">Help.</span></div>
<div id="list">
<div id="lhead"><div class="cd" style="left:121px"></div><div class="cd" style="left:239px"></div><div class="cd" style="left:344px"></div><div class="cd" style="left:468px"></div><div class="cd" style="left:584px"></div></div>
<div id="lrow"></div>
</div>
<svg class="ic" style="left:402px;top:176px" width="7" height="4" viewBox="0 0 7 4"><path d="M0 4L3.500 0 7 4z" fill="#000"/></svg>
<div class="ic" style="left:350px;top:192px"><svg width="16" height="15" viewBox="0 0 16 15" >
<path d="M2.500 .5h10.300l-.5 1.500v12.300H2.500z" fill="#d3e5f6" stroke="#84a6d0" stroke-width="1"/>
<rect x="9.800" y="5" width="2" height="9" fill="#dde2b4" opacity=".8"/>
<circle cx="13.600" cy="1.800" r="1.300" fill="#a9b58f" stroke="#7e8f7a" stroke-width=".7"/>
<path d="M5 3.500h5M5 5.500h5M5 7.500h5M5 9.500h5" stroke="#6f88c6" stroke-width="1"/>
<rect x=".5" y="7.500" width="7" height="7" fill="#d2e8fc" stroke="#6591c6" stroke-width="1"/>
<path d="M2.200 12.800l3-3M2.800 9.300h3.200v3.200" fill="none" stroke="#2733a8" stroke-width="1.600"/>
</svg></div>
<div class="t lh" style="left:352.00px;top:175.19px;font-size:11px;line-height:16px;letter-spacing:-0.122px">Precedence</div>
<div class="t lh" style="left:471.00px;top:175.19px;font-size:11px;line-height:16px;letter-spacing:-0.184px">GPO</div>
<div class="t lh" style="left:588.90px;top:175.19px;font-size:11px;line-height:16px;letter-spacing:-0.137px">Location</div>
<div class="t lh" style="left:693.00px;top:175.19px;font-size:11px;line-height:16px;letter-spacing:-0.270px">GPO Status</div>
<div class="t lh" style="left:817.60px;top:175.19px;font-size:11px;line-height:16px;letter-spacing:-0.231px">WMI Filter</div>
<div class="t lr" style="left:381.20px;top:192.19px;font-size:11px;line-height:16px;letter-spacing:-2.025px">1</div>
<div class="t lr" style="left:471.40px;top:192.19px;font-size:11px;line-height:16px;letter-spacing:-0.191px">Default Domain Policy</div>
<div class="t lr" style="left:589.10px;top:192.19px;font-size:11px;line-height:16px;letter-spacing:-0.240px">THESOLVING.lo</div>
<div class="t lr" style="left:668.60px;top:192.19px;font-size:11px;line-height:16px;letter-spacing:-0.124px">...</div>
<div class="t lr" style="left:693.00px;top:192.19px;font-size:11px;line-height:16px;letter-spacing:-0.096px">Enabled</div>
<div class="t lr" style="left:817.60px;top:192.19px;font-size:11px;line-height:16px;letter-spacing:-0.174px">None</div>
</div>
</div>
<div id="status"><div class="sd" style="left:752px"></div><div class="sd" style="left:885px"></div><div class="sd" style="left:970px"></div>
<div id="sttext"><span class="t st" style="left:10.30px;top:666.84px;font-size:12px;line-height:18px;letter-spacing:-0.672px">Create</span> <span class="t st" style="left:47.00px;top:666.84px;font-size:12px;line-height:18px;letter-spacing:-0.888px">a</span> <span class="t st" style="left:56.30px;top:666.84px;font-size:12px;line-height:18px;letter-spacing:-1.157px">GPO</span> <span class="t st" style="left:83.80px;top:666.84px;font-size:12px;line-height:18px;letter-spacing:-0.372px">in</span> <span class="t st" style="left:95.30px;top:666.84px;font-size:12px;line-height:18px;letter-spacing:0.278px">this</span> <span class="t st" style="left:119.10px;top:666.84px;font-size:12px;line-height:18px;letter-spacing:0.107px">domain</span> <span class="t st" style="left:162.30px;top:666.84px;font-size:12px;line-height:18px;letter-spacing:-0.444px">and</span> <span class="t st" style="left:185.30px;top:666.84px;font-size:12px;line-height:18px;letter-spacing:-0.104px">link</span> <span class="t st" style="left:207.30px;top:666.84px;font-size:12px;line-height:18px;letter-spacing:-0.350px">it</span> <span class="t st" style="left:216.60px;top:666.84px;font-size:12px;line-height:18px;letter-spacing:0.292px">to</span> <span class="t st" style="left:231.10px;top:666.84px;font-size:12px;line-height:18px;letter-spacing:0.003px">this</span> <span class="t st" style="left:253.40px;top:666.84px;font-size:12px;line-height:18px;letter-spacing:-0.008px">container</span></div>
</div>
<div id="ctx"><div id="ctxg"></div><div id="ctxh"></div><div class="cms" style="top:297px"></div><div class="cms" style="top:345px"></div><div class="cms" style="top:393px"></div><div class="cms" style="top:463px"></div><div class="cms" style="top:489px"></div><div id="ctxa"></div></div>
<div class="t cmi" style="left:204.20px;top:209.84px;font-size:12px;line-height:18px;letter-spacing:-0.151px;z-index:20">Create a GPO in this domain, and Link it here...</div>
<div class="t cmi" style="left:204.20px;top:231.84px;font-size:12px;line-height:18px;letter-spacing:-0.316px;z-index:20">Link an Existing GPO...</div>
<div class="t cmi" style="left:204.20px;top:253.84px;font-size:12px;line-height:18px;letter-spacing:-0.045px;z-index:20">Block Inheritance</div>
<div class="t cmi" style="left:204.20px;top:275.84px;font-size:12px;line-height:18px;letter-spacing:-0.147px;z-index:20">Group Policy Update...</div>
<div class="t cmi" style="left:204.20px;top:301.84px;font-size:12px;line-height:18px;letter-spacing:-0.065px;z-index:20">Group Policy Modeling Wizard...</div>
<div class="t cmi" style="left:204.20px;top:323.84px;font-size:12px;line-height:18px;letter-spacing:-0.022px;z-index:20">New Organizational Unit</div>
<div class="t cmi" style="left:204.20px;top:349.84px;font-size:12px;line-height:18px;letter-spacing:-0.249px;z-index:20">View</div>
<div class="t cmi" style="left:204.20px;top:371.84px;font-size:12px;line-height:18px;letter-spacing:0.070px;z-index:20">New Window from Here</div>
<div class="t cmi" style="left:204.20px;top:397.84px;font-size:12px;line-height:18px;letter-spacing:-0.298px;z-index:20">Delete</div>
<div class="t cmi" style="left:204.20px;top:419.84px;font-size:12px;line-height:18px;letter-spacing:-0.393px;z-index:20">Rename</div>
<div class="t cmi" style="left:204.20px;top:441.84px;font-size:12px;line-height:18px;letter-spacing:-0.476px;z-index:20">Refresh</div>
<div class="t cmi" style="left:204.20px;top:467.84px;font-size:12px;line-height:18px;letter-spacing:-0.160px;z-index:20">Properties</div>
<div class="t cmi" style="left:204.20px;top:493.84px;font-size:12px;line-height:18px;letter-spacing:0.028px;z-index:20">Help</div>

</body>
</html>
